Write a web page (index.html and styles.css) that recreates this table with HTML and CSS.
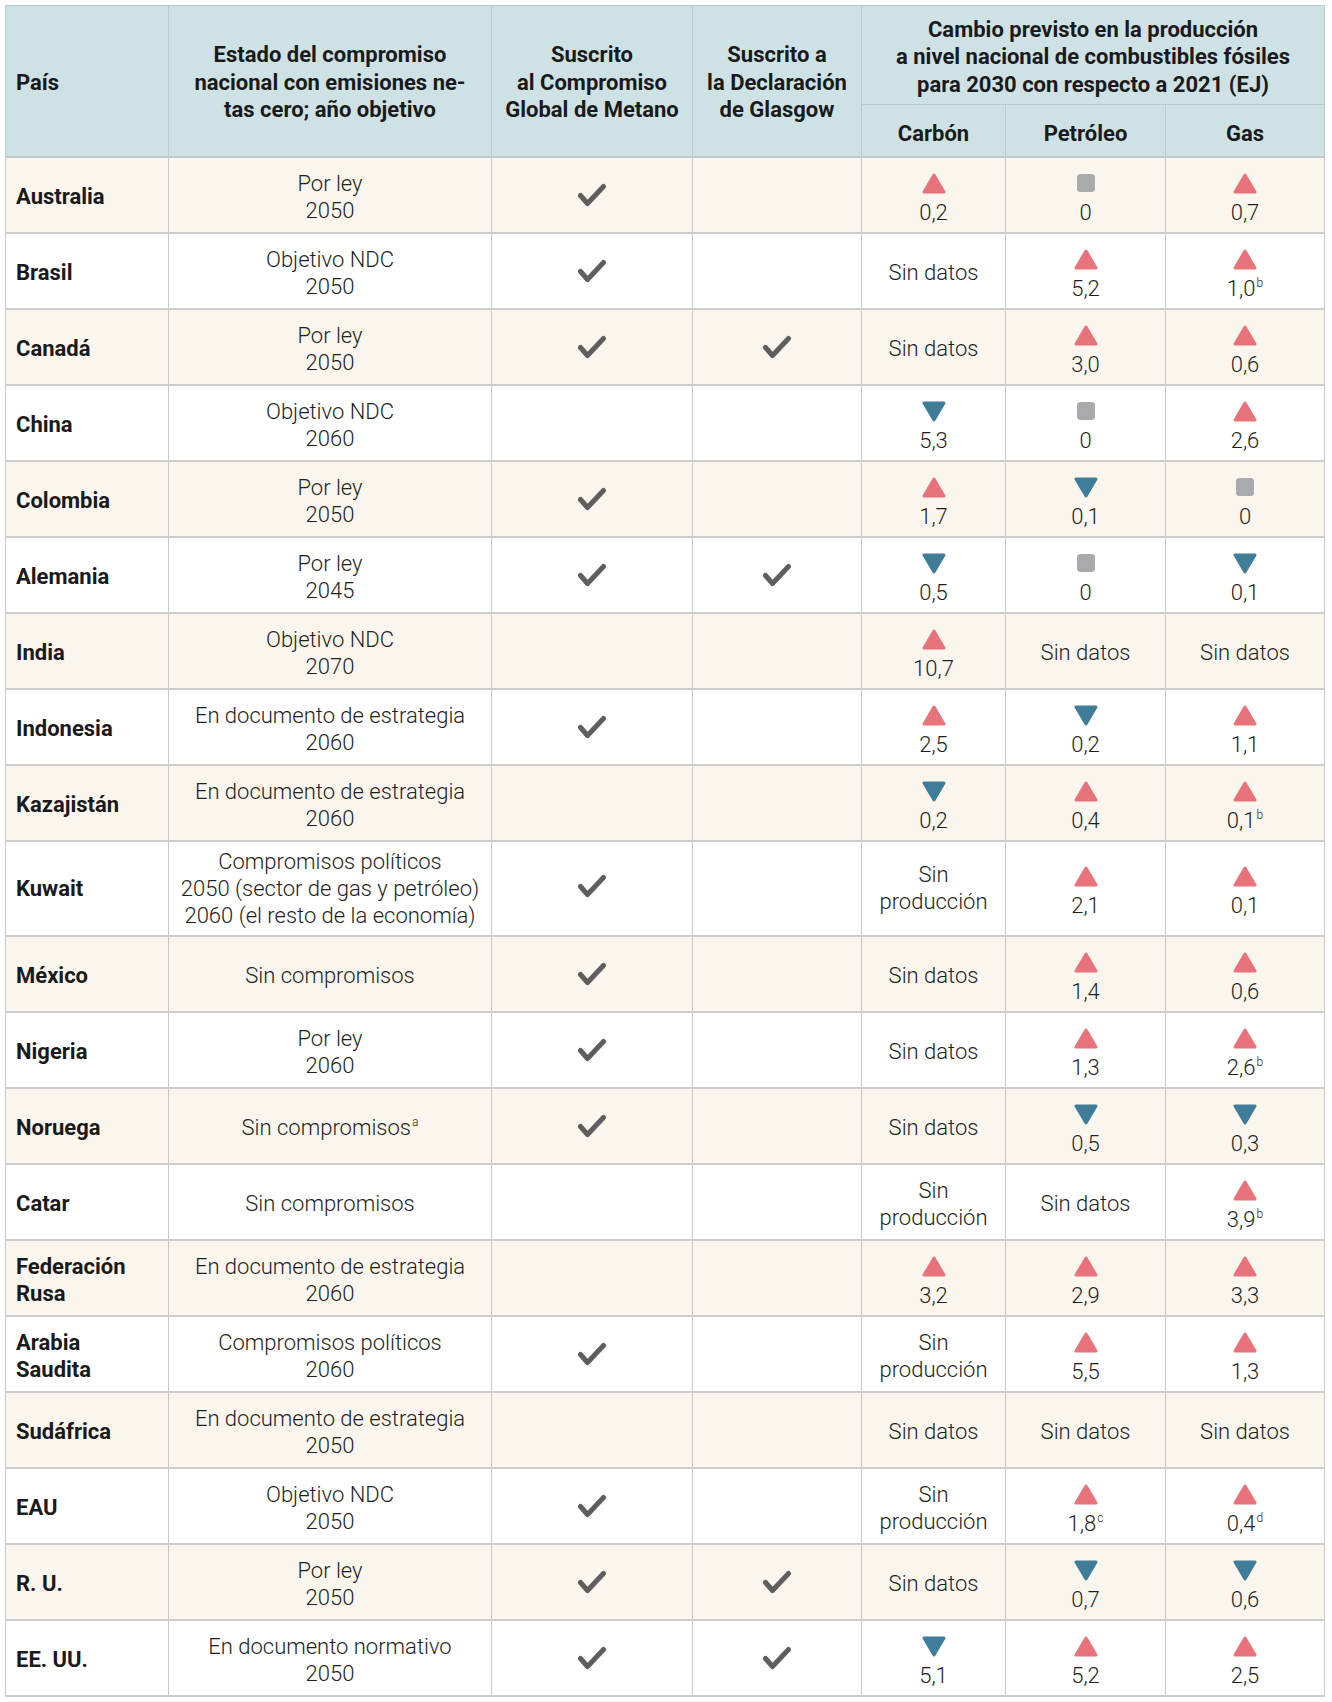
FILE: index.html
```html
<!DOCTYPE html>
<html lang="es">
<head>
<meta charset="utf-8">
<title>Compromisos nacionales y producción de combustibles fósiles</title>
<link rel="stylesheet" href="styles.css">
</head>
<body>
<svg class="defs" aria-hidden="true">
  <symbol id="up" viewBox="0 0 24 21"><polygon points="12,2 22,19 2,19" fill="#e8737a" stroke="#e8737a" stroke-width="3" stroke-linejoin="round"/></symbol>
  <symbol id="down" viewBox="0 0 24 21"><polygon points="2,2 22,2 12,19" fill="#3f7d99" stroke="#3f7d99" stroke-width="3" stroke-linejoin="round"/></symbol>
  <symbol id="flat" viewBox="0 0 24 21"><rect x="3" y="1" width="18" height="18" rx="3.5" fill="#a9aaad"/></symbol>
  <symbol id="check" viewBox="0 0 30 24"><path d="M3.5 12.5 L10.5 20.5 L26.5 3.5" fill="none" stroke="#5e5e5e" stroke-width="5" stroke-linecap="round" stroke-linejoin="round"/></symbol>
</svg>
<div class="page">
<table class="tbl">
  <colgroup>
    <col class="w-country"><col class="w-commit"><col class="w-met"><col class="w-gla"><col class="w-coal"><col class="w-oil"><col class="w-gas">
  </colgroup>
  <thead>
    <tr class="hr1">
      <th rowspan="2" class="h-left">País</th>
      <th rowspan="2">Estado del compromiso<br>nacional con emisiones ne-<br>tas cero; año objetivo</th>
      <th rowspan="2">Suscrito<br>al Compromiso<br>Global de Metano</th>
      <th rowspan="2">Suscrito a<br>la Declaración<br>de Glasgow</th>
      <th colspan="3" class="h-span">Cambio previsto en la producción<br>a nivel nacional de combustibles fósiles<br>para 2030 con respecto a 2021 (EJ)</th>
    </tr>
    <tr class="hr2">
      <th>Carbón</th>
      <th>Petróleo</th>
      <th>Gas</th>
    </tr>
  </thead>
  <tbody>
    <tr class="stripe">
      <td class="country">Australia</td>
      <td>Por ley<br>2050</td>
      <td><svg class="chk"><use href="#check"/></svg></td>
      <td></td>
      <td class="ind"><svg class="tri"><use href="#up"/></svg><span class="val">0,2</span></td>
      <td class="ind"><svg class="tri"><use href="#flat"/></svg><span class="val">0</span></td>
      <td class="ind"><svg class="tri"><use href="#up"/></svg><span class="val">0,7</span></td>
    </tr>
    <tr>
      <td class="country">Brasil</td>
      <td>Objetivo NDC<br>2050</td>
      <td><svg class="chk"><use href="#check"/></svg></td>
      <td></td>
      <td>Sin datos</td>
      <td class="ind"><svg class="tri"><use href="#up"/></svg><span class="val">5,2</span></td>
      <td class="ind"><svg class="tri"><use href="#up"/></svg><span class="val">1,0<sup>b</sup></span></td>
    </tr>
    <tr class="stripe">
      <td class="country">Canadá</td>
      <td>Por ley<br>2050</td>
      <td><svg class="chk"><use href="#check"/></svg></td>
      <td><svg class="chk"><use href="#check"/></svg></td>
      <td>Sin datos</td>
      <td class="ind"><svg class="tri"><use href="#up"/></svg><span class="val">3,0</span></td>
      <td class="ind"><svg class="tri"><use href="#up"/></svg><span class="val">0,6</span></td>
    </tr>
    <tr>
      <td class="country">China</td>
      <td>Objetivo NDC<br>2060</td>
      <td></td>
      <td></td>
      <td class="ind"><svg class="tri"><use href="#down"/></svg><span class="val">5,3</span></td>
      <td class="ind"><svg class="tri"><use href="#flat"/></svg><span class="val">0</span></td>
      <td class="ind"><svg class="tri"><use href="#up"/></svg><span class="val">2,6</span></td>
    </tr>
    <tr class="stripe">
      <td class="country">Colombia</td>
      <td>Por ley<br>2050</td>
      <td><svg class="chk"><use href="#check"/></svg></td>
      <td></td>
      <td class="ind"><svg class="tri"><use href="#up"/></svg><span class="val">1,7</span></td>
      <td class="ind"><svg class="tri"><use href="#down"/></svg><span class="val">0,1</span></td>
      <td class="ind"><svg class="tri"><use href="#flat"/></svg><span class="val">0</span></td>
    </tr>
    <tr>
      <td class="country">Alemania</td>
      <td>Por ley<br>2045</td>
      <td><svg class="chk"><use href="#check"/></svg></td>
      <td><svg class="chk"><use href="#check"/></svg></td>
      <td class="ind"><svg class="tri"><use href="#down"/></svg><span class="val">0,5</span></td>
      <td class="ind"><svg class="tri"><use href="#flat"/></svg><span class="val">0</span></td>
      <td class="ind"><svg class="tri"><use href="#down"/></svg><span class="val">0,1</span></td>
    </tr>
    <tr class="stripe">
      <td class="country">India</td>
      <td>Objetivo NDC<br>2070</td>
      <td></td>
      <td></td>
      <td class="ind"><svg class="tri"><use href="#up"/></svg><span class="val">10,7</span></td>
      <td>Sin datos</td>
      <td>Sin datos</td>
    </tr>
    <tr>
      <td class="country">Indonesia</td>
      <td>En documento de estrategia<br>2060</td>
      <td><svg class="chk"><use href="#check"/></svg></td>
      <td></td>
      <td class="ind"><svg class="tri"><use href="#up"/></svg><span class="val">2,5</span></td>
      <td class="ind"><svg class="tri"><use href="#down"/></svg><span class="val">0,2</span></td>
      <td class="ind"><svg class="tri"><use href="#up"/></svg><span class="val">1,1</span></td>
    </tr>
    <tr class="stripe">
      <td class="country">Kazajistán</td>
      <td>En documento de estrategia<br>2060</td>
      <td></td>
      <td></td>
      <td class="ind"><svg class="tri"><use href="#down"/></svg><span class="val">0,2</span></td>
      <td class="ind"><svg class="tri"><use href="#up"/></svg><span class="val">0,4</span></td>
      <td class="ind"><svg class="tri"><use href="#up"/></svg><span class="val">0,1<sup>b</sup></span></td>
    </tr>
    <tr class="tall">
      <td class="country">Kuwait</td>
      <td>Compromisos políticos<br>2050 (sector de gas y petróleo)<br>2060 (el resto de la economía)</td>
      <td><svg class="chk"><use href="#check"/></svg></td>
      <td></td>
      <td>Sin<br>producción</td>
      <td class="ind"><svg class="tri"><use href="#up"/></svg><span class="val">2,1</span></td>
      <td class="ind"><svg class="tri"><use href="#up"/></svg><span class="val">0,1</span></td>
    </tr>
    <tr class="stripe">
      <td class="country">México</td>
      <td>Sin compromisos</td>
      <td><svg class="chk"><use href="#check"/></svg></td>
      <td></td>
      <td>Sin datos</td>
      <td class="ind"><svg class="tri"><use href="#up"/></svg><span class="val">1,4</span></td>
      <td class="ind"><svg class="tri"><use href="#up"/></svg><span class="val">0,6</span></td>
    </tr>
    <tr>
      <td class="country">Nigeria</td>
      <td>Por ley<br>2060</td>
      <td><svg class="chk"><use href="#check"/></svg></td>
      <td></td>
      <td>Sin datos</td>
      <td class="ind"><svg class="tri"><use href="#up"/></svg><span class="val">1,3</span></td>
      <td class="ind"><svg class="tri"><use href="#up"/></svg><span class="val">2,6<sup>b</sup></span></td>
    </tr>
    <tr class="stripe">
      <td class="country">Noruega</td>
      <td>Sin compromisos<sup>a</sup></td>
      <td><svg class="chk"><use href="#check"/></svg></td>
      <td></td>
      <td>Sin datos</td>
      <td class="ind"><svg class="tri"><use href="#down"/></svg><span class="val">0,5</span></td>
      <td class="ind"><svg class="tri"><use href="#down"/></svg><span class="val">0,3</span></td>
    </tr>
    <tr>
      <td class="country">Catar</td>
      <td>Sin compromisos</td>
      <td></td>
      <td></td>
      <td>Sin<br>producción</td>
      <td>Sin datos</td>
      <td class="ind"><svg class="tri"><use href="#up"/></svg><span class="val">3,9<sup>b</sup></span></td>
    </tr>
    <tr class="stripe">
      <td class="country">Federación<br>Rusa</td>
      <td>En documento de estrategia<br>2060</td>
      <td></td>
      <td></td>
      <td class="ind"><svg class="tri"><use href="#up"/></svg><span class="val">3,2</span></td>
      <td class="ind"><svg class="tri"><use href="#up"/></svg><span class="val">2,9</span></td>
      <td class="ind"><svg class="tri"><use href="#up"/></svg><span class="val">3,3</span></td>
    </tr>
    <tr>
      <td class="country">Arabia<br>Saudita</td>
      <td>Compromisos políticos<br>2060</td>
      <td><svg class="chk"><use href="#check"/></svg></td>
      <td></td>
      <td>Sin<br>producción</td>
      <td class="ind"><svg class="tri"><use href="#up"/></svg><span class="val">5,5</span></td>
      <td class="ind"><svg class="tri"><use href="#up"/></svg><span class="val">1,3</span></td>
    </tr>
    <tr class="stripe">
      <td class="country">Sudáfrica</td>
      <td>En documento de estrategia<br>2050</td>
      <td></td>
      <td></td>
      <td>Sin datos</td>
      <td>Sin datos</td>
      <td>Sin datos</td>
    </tr>
    <tr>
      <td class="country">EAU</td>
      <td>Objetivo NDC<br>2050</td>
      <td><svg class="chk"><use href="#check"/></svg></td>
      <td></td>
      <td>Sin<br>producción</td>
      <td class="ind"><svg class="tri"><use href="#up"/></svg><span class="val">1,8<sup>c</sup></span></td>
      <td class="ind"><svg class="tri"><use href="#up"/></svg><span class="val">0,4<sup>d</sup></span></td>
    </tr>
    <tr class="stripe">
      <td class="country">R. U.</td>
      <td>Por ley<br>2050</td>
      <td><svg class="chk"><use href="#check"/></svg></td>
      <td><svg class="chk"><use href="#check"/></svg></td>
      <td>Sin datos</td>
      <td class="ind"><svg class="tri"><use href="#down"/></svg><span class="val">0,7</span></td>
      <td class="ind"><svg class="tri"><use href="#down"/></svg><span class="val">0,6</span></td>
    </tr>
    <tr>
      <td class="country">EE. UU.</td>
      <td>En documento normativo<br>2050</td>
      <td><svg class="chk"><use href="#check"/></svg></td>
      <td><svg class="chk"><use href="#check"/></svg></td>
      <td class="ind"><svg class="tri"><use href="#down"/></svg><span class="val">5,1</span></td>
      <td class="ind"><svg class="tri"><use href="#up"/></svg><span class="val">5,2</span></td>
      <td class="ind"><svg class="tri"><use href="#up"/></svg><span class="val">2,5</span></td>
    </tr>
  </tbody>
</table>
</div>
</body>
</html>
```

FILE: styles.css
```css
html, body {
  margin: 0;
  padding: 0;
  background: #ffffff;
}

.defs {
  position: absolute;
  width: 0;
  height: 0;
  overflow: hidden;
}

.page {
  padding: 5px 8px 5px 5px;
}

.tbl {
  border-collapse: collapse;
  table-layout: fixed;
  width: 1319px;
  font-family: Roboto, "Liberation Sans", sans-serif;
  color: #1e1e1e;
}

.w-country { width: 163px; }
.w-commit { width: 323px; }
.w-met { width: 201px; }
.w-gla { width: 169px; }
.w-coal { width: 144px; }
.w-oil { width: 160px; }
.w-gas { width: 159px; }

.tbl th {
  background: #cee2e6;
  font-weight: 700;
  font-size: 22px;
  line-height: 27.5px;
  color: #1a1a1a;
  text-align: center;
  vertical-align: middle;
  padding: 3px 4px 0;
  border: 1px solid #b9cbcf;
  border-bottom: 2px solid #c3c8c9;
}

.tbl th.h-left {
  text-align: left;
  padding-left: 10px;
}

.tbl th.h-span {
  border-bottom: 1px solid #b9cbcf;
  padding-top: 4px;
}

.hr2 th {
  padding-top: 6px;
}

.hr1 { height: 99px; }
.hr2 { height: 52px; }

.tbl tbody tr { height: 76px; }
.tbl tbody tr.tall { height: 95px; }

.tbl td {
  font-size: 22px;
  font-weight: 300;
  line-height: 27px;
  text-align: center;
  vertical-align: middle;
  padding: 4px 4px 0;
  border-left: 1px solid #c8c8c8;
  border-right: 1px solid #c8c8c8;
  border-bottom: 2px solid #cdcdcd;
}

.tbl tr.tall td {
  padding-top: 0;
}

.tbl tr.stripe td {
  background: #faf6ee;
}

.tbl td.country {
  text-align: left;
  font-weight: 700;
  font-size: 22px;
  line-height: 27px;
  color: #1a1a1a;
  padding-left: 10px;
}

.tbl td.ind,
.tbl tr.tall td.ind {
  padding-top: 9px;
}

.tri {
  display: block;
  width: 24px;
  height: 21px;
  margin: 0 auto 5px;
}

.val {
  display: block;
  line-height: 27px;
}

.chk {
  display: block;
  width: 30px;
  height: 24px;
  margin: -4px auto 0;
}

sup {
  font-size: 12px;
  line-height: 0;
  vertical-align: 9px;
  margin-left: 1px;
}
```
